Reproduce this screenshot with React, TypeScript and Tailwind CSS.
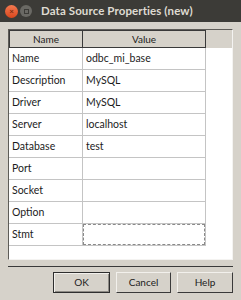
import React from "react";

const rows: [string, string][] = [
  ["Name", "odbc_mi_base"],
  ["Description", "MySQL"],
  ["Driver", "MySQL"],
  ["Server", "localhost"],
  ["Database", "test"],
  ["Port", ""],
  ["Socket", ""],
  ["Option", ""],
  ["Stmt", ""],
];

export default function App() {
  return (
    <div className="w-[241px] h-[300px] bg-[#d6d2ca] flex flex-col font-['Lato',sans-serif] text-[#1c1c1c] overflow-hidden">
      <div className="h-[22px] bg-[#3c3b37] flex items-center shrink-0">
        <div className="ml-[5px] w-[13px] h-[13px] rounded-full bg-gradient-to-b from-[#f4794f] to-[#d8461b] flex items-center justify-center">
          <span className="text-[8px] leading-none text-[#7a2a10] font-bold">×</span>
        </div>
        <div className="w-[12px] h-[12px] rounded-full bg-[#6a6964] flex items-center justify-center ml-[2px]">
          <div className="w-[5px] h-[5px] border border-[#3c3b37]" />
        </div>
        <span className="ml-[9px] text-[11.5px] font-bold text-[#dfdbd2] leading-none tracking-[0.1px]">
          Data Source Properties (new)
        </span>
      </div>
      <div className="px-[8px] pt-[7px] flex flex-col">
        <div className="h-[231px] border border-t-[#5e5c58] border-l-[#5e5c58] border-b-[#f4f3f1] border-r-[#f4f3f1] bg-white flex flex-col">
          <div className="h-[18px] flex shrink-0 bg-[#d6d2ca] text-[10px]">
            <div className="w-[74px] border border-[#3a3a3a] flex items-center justify-center">Name</div>
            <div className="w-[123px] border-t border-b border-r border-[#3a3a3a] flex items-center justify-center">Value</div>
            <div className="flex-1" />
          </div>
          {rows.map(([k, v], i) => (
            <div key={k} className="h-[22px] flex shrink-0 text-[10.5px]">
              <div className="w-[74px] border-r border-b border-[#c4c4c4] flex items-center pl-[3px]">{k}</div>
              {i === rows.length - 1 ? (
                <div className="w-[123px] border-r border-b border-[#c4c4c4] flex">
                  <div className="flex-1 border border-dashed border-[#8a8a8a]" />
                </div>
              ) : (
                <div className="w-[123px] border-r border-b border-[#c4c4c4] flex items-center pl-[3px]">{v}</div>
              )}
            </div>
          ))}
        </div>
        <div className="mt-[6px] h-px bg-[#3a3a3a]" />
        <div className="mt-[5px] flex justify-end gap-[6px] text-[10px]">
          <button className="w-[57px] h-[21px] border border-[#2e2e2e] bg-[#d6d2ca] flex items-center justify-center shadow-[inset_1px_1px_0_#f2f0ec,inset_-1px_-1px_0_#8e8b85]">OK</button>
          <button className="w-[55px] h-[21px] border border-t-[#f2f0ec] border-l-[#f2f0ec] border-b-[#3a3a3a] border-r-[#3a3a3a] bg-[#d6d2ca] flex items-center justify-center">Cancel</button>
          <button className="w-[56px] h-[21px] border border-t-[#f2f0ec] border-l-[#f2f0ec] border-b-[#3a3a3a] border-r-[#3a3a3a] bg-[#d6d2ca] flex items-center justify-center">Help</button>
        </div>
      </div>
    </div>
  );
}
